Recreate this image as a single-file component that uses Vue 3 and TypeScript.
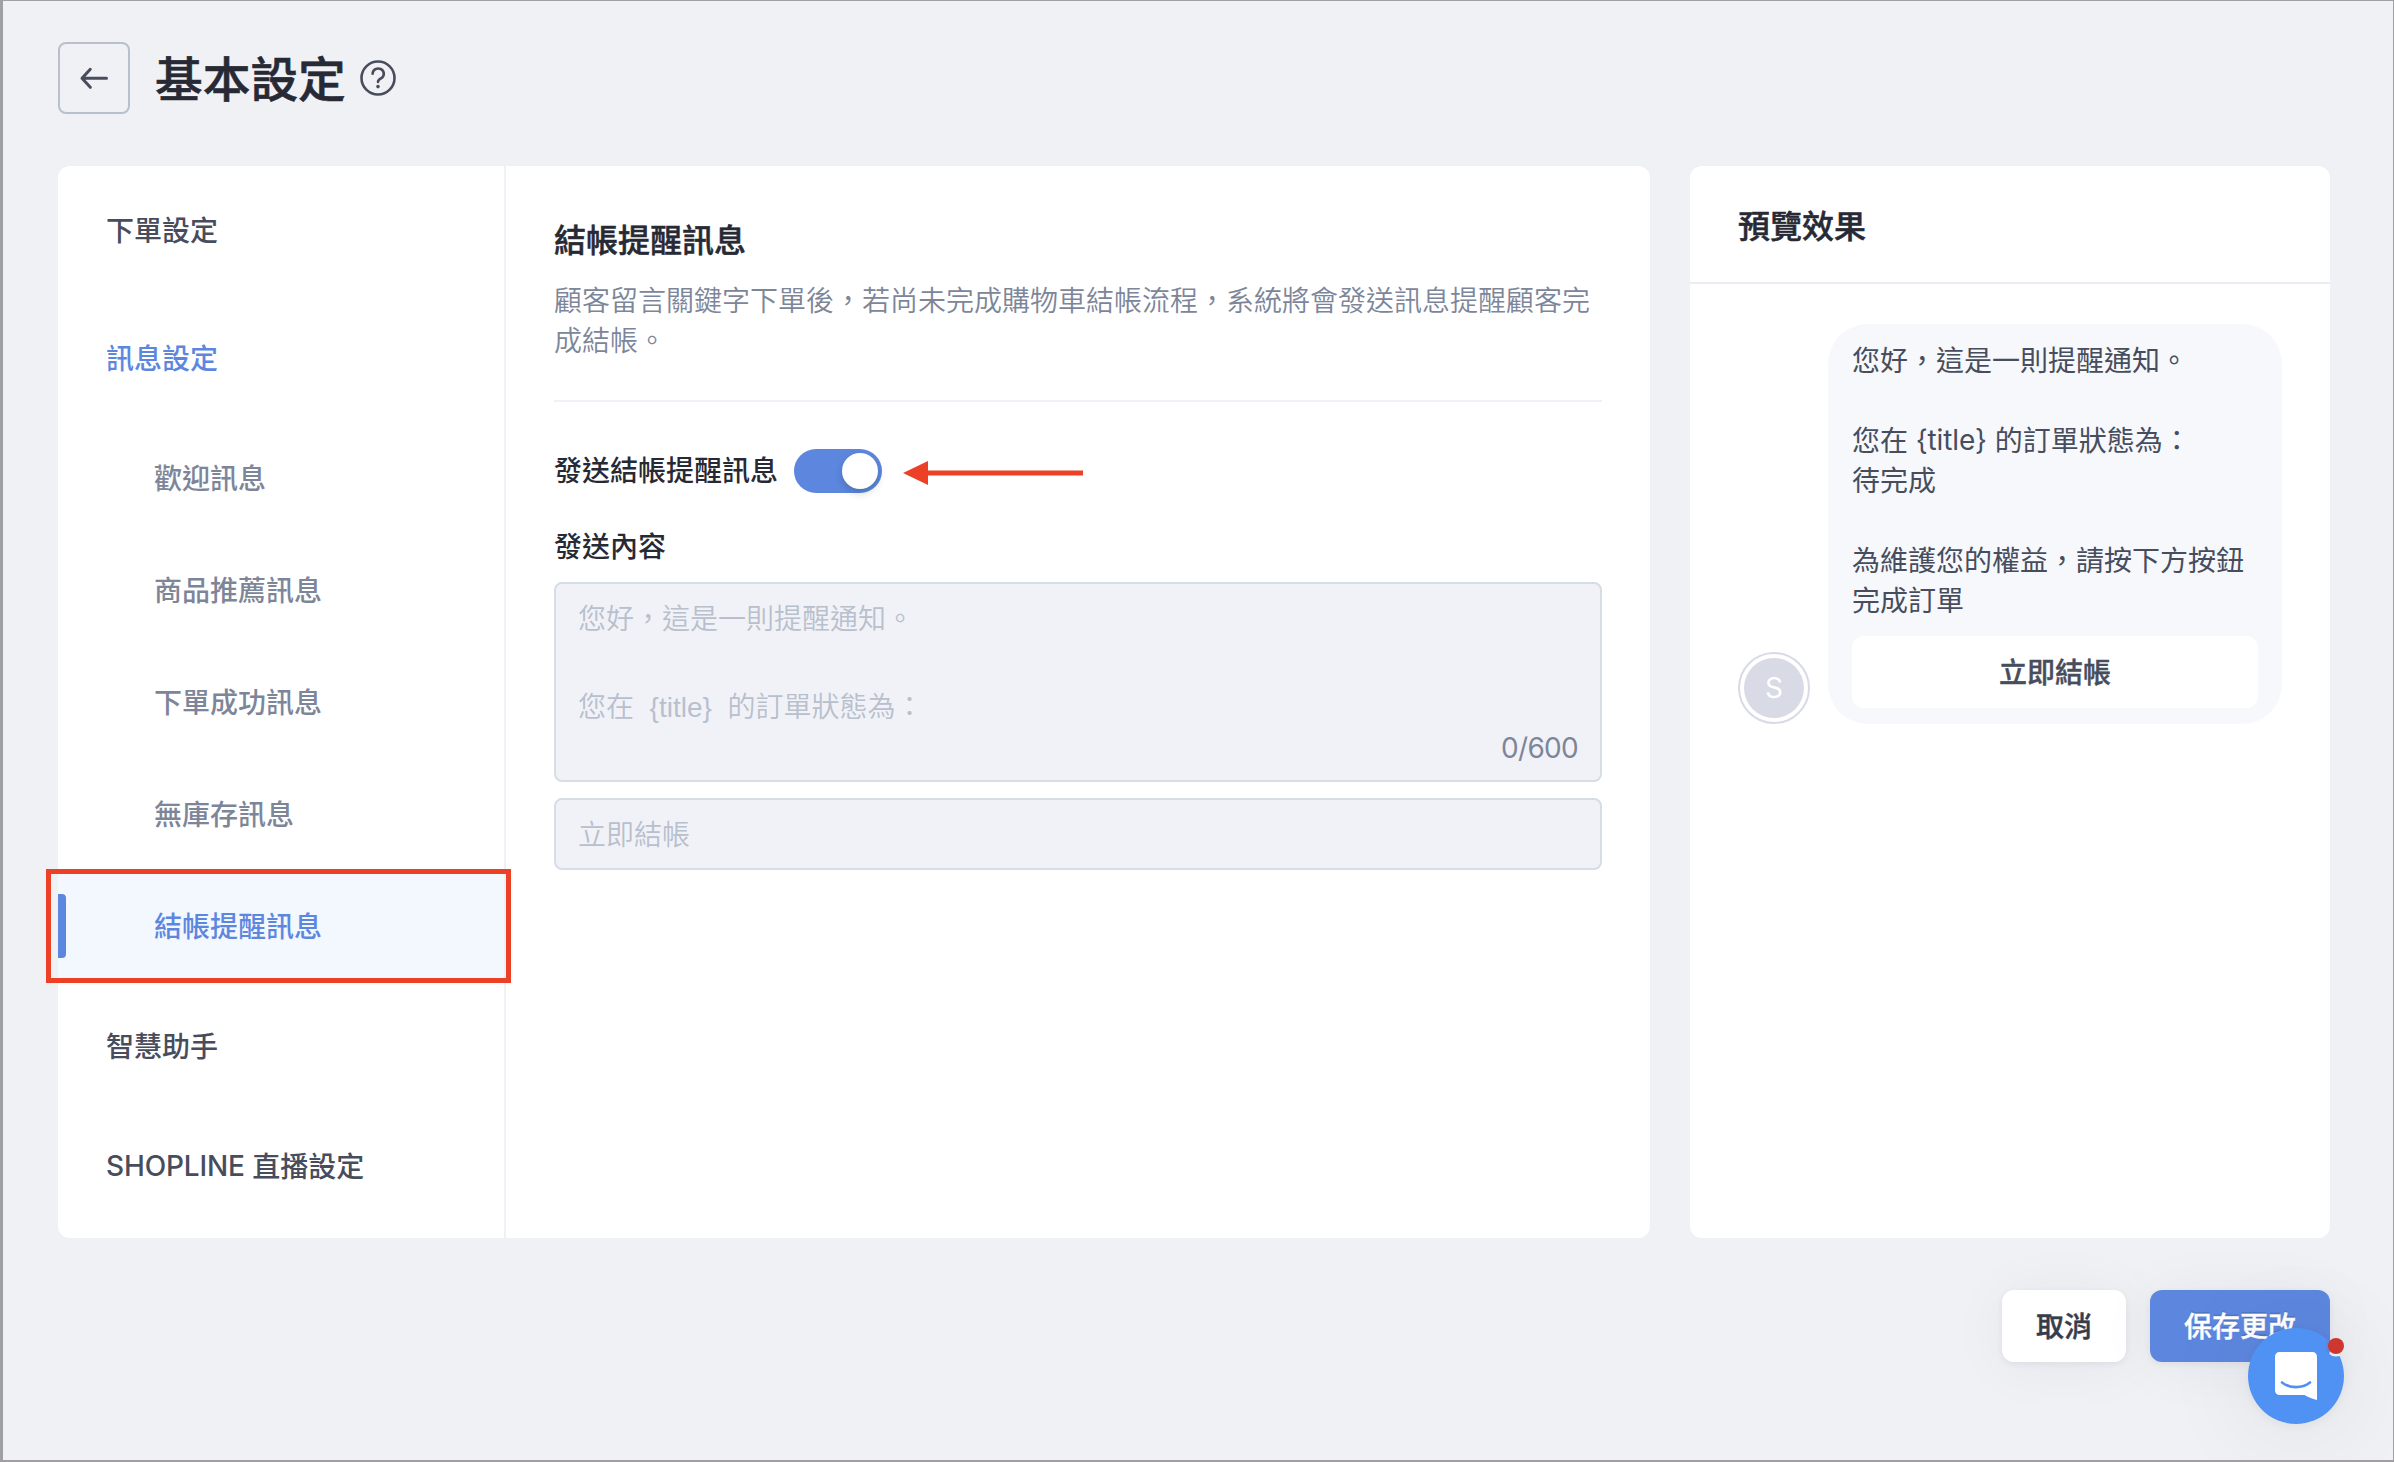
<script setup lang="ts">
interface NavItem {
  label: string
  latin?: string
  child?: boolean
  open?: boolean
  selected?: boolean
}

const navItems: NavItem[] = [
  { label: '下單設定' },
  { label: '訊息設定', open: true },
  { label: '歡迎訊息', child: true },
  { label: '商品推薦訊息', child: true },
  { label: '下單成功訊息', child: true },
  { label: '無庫存訊息', child: true },
  { label: '結帳提醒訊息', child: true, selected: true },
  { label: '智慧助手' },
  { latin: 'SHOPLINE ', label: '直播設定' },
]

const messagePlaceholder = '您好，這是一則提醒通知。\n\n您在  {title}  的訂單狀態為：'
</script>

<template>
  <div class="page">
    <header class="header">
      <button class="back" aria-label="返回">
        <svg width="32" height="32" viewBox="0 0 32 32" fill="none" stroke="#474d5c" stroke-width="3" stroke-linecap="round" stroke-linejoin="round">
          <path d="M28.5 16.3H4M12.300 7.3L4 16.3l8.300 9" />
        </svg>
      </button>
      <h1 class="title">基本設定</h1>
      <svg class="help" width="36" height="36" viewBox="0 0 36 36" fill="none" stroke="#474d5c" stroke-width="2.6" stroke-linecap="round" stroke-linejoin="round">
        <circle cx="18" cy="18" r="16.5" />
        <path d="M12.6 13.8a5.6 5.3 0 1 1 8.4 4.6c-1.9 1.1-3 1.7-3 3.5" />
        <circle cx="18" cy="26.6" r="1.8" fill="#474d5c" stroke="none" />
      </svg>
    </header>

    <main class="cards">
      <section class="card settings">
        <nav class="nav">
          <div
            v-for="item in navItems"
            :key="item.label"
            class="nav-item"
            :class="{ child: item.child, open: item.open, selected: item.selected }"
          >
            <span class="nav-label"><span v-if="item.latin" class="latin">{{ item.latin }}</span>{{ item.label }}</span>
            <span v-if="item.selected" class="outline"></span>
          </div>
        </nav>

        <div class="content">
          <h2 class="heading">結帳提醒訊息</h2>
          <p class="desc">顧客留言關鍵字下單後，若尚未完成購物車結帳流程，系統將會發送訊息提醒顧客完成結帳。</p>
          <div class="rule"></div>
          <div class="switch-row">
            <span class="label">發送結帳提醒訊息</span>
            <span class="switch"><span class="knob"></span></span>
            <svg class="arrow" width="180" height="24" viewBox="0 0 180 24">
              <path d="M0 12L25 0v9.5h155v5H25V24z" fill="#ec4126" />
            </svg>
          </div>
          <div class="label field-label">發送內容</div>
          <div class="field area">
            <div class="placeholder lines">{{ messagePlaceholder }}</div>
            <div class="counter">0/600</div>
          </div>
          <div class="field single">
            <span class="placeholder">立即結帳</span>
          </div>
        </div>
      </section>

      <section class="card preview">
        <div class="preview-head">預覽效果</div>
        <div class="chat">
          <div class="avatar"><span class="avatar-face">S</span></div>
          <div class="bubble">
            <div class="bubble-text">
              您好，這是一則提醒通知。<br /><br />
              您在<span class="latin"> {title} </span>的訂單狀態為：<br />
              待完成<br /><br />
              為維護您的權益，請按下方按鈕完成訂單
            </div>
            <div class="bubble-button">立即結帳</div>
          </div>
        </div>
      </section>
    </main>

    <footer class="footer">
      <button class="btn cancel">取消</button>
      <button class="btn save">保存更改</button>
    </footer>

    <div class="messenger">
      <svg width="96" height="96" viewBox="0 0 96 96">
        <defs>
          <mask id="badge-gap">
            <rect width="96" height="96" fill="#fff" />
            <circle cx="88" cy="18" r="10.5" fill="#000" />
          </mask>
        </defs>
        <circle cx="48" cy="48" r="48" fill="#5091f4" mask="url(#badge-gap)" />
        <path d="M31.500 24h33a4.500 4.500 0 0 1 4.500 4.500v43.500c-5-1.200-9-3-12.500-5H31.500a4.500 4.500 0 0 1-4.500-4.500V28.500a4.500 4.500 0 0 1 4.500-4.500z" fill="#fff" />
        <path d="M34 54.500c8 6.200 20 6.200 28 0" fill="none" stroke="#5091f4" stroke-width="2.600" stroke-linecap="round" />
        <circle cx="88" cy="18" r="8" fill="#cd372e" />
      </svg>
    </div>
  </div>
</template>

<style>
html,
body {
  margin: 0;
  background: #f0f1f5;
}
</style>

<style scoped>
.page {
  position: relative;
  box-sizing: border-box;
  width: 100vw;
  height: 100vh;
  overflow: hidden;
  padding: 41px 63px 0 55px;
  border: solid #9f9fa4;
  border-width: 1px 1px 2px 3px;
  background: #f0f1f5;
  font-family: Inter, 'Noto Sans CJK TC', sans-serif;
  font-size: 28px;
  color: #474d5c;
}
.latin {
  position: relative;
  top: -1px;
  letter-spacing: -0.13px;
  white-space: pre;
}
.header {
  display: flex;
  align-items: center;
  height: 72px;
}
.back {
  display: flex;
  align-items: center;
  justify-content: center;
  box-sizing: border-box;
  width: 72px;
  height: 72px;
  padding: 0;
  border: 2px solid #b8bfcd;
  border-radius: 8px;
  background: transparent;
}
.title {
  margin: 3px 0 0 25px;
  font-size: 47.7px;
  line-height: 72px;
  font-weight: 500;
  -webkit-text-stroke: 0.6px #272934;
  color: #272934;
}
.help {
  margin-left: 14px;
}
.cards {
  display: flex;
  gap: 40px;
  height: 1072px;
  margin-top: 52px;
}
.card {
  border-radius: 12px;
  background: #fff;
}
.settings {
  display: flex;
  width: 1592px;
}
.nav {
  box-sizing: border-box;
  width: 448px;
  border-right: 2px solid #f0f1f6;
}
.nav-item {
  position: relative;
  display: flex;
  align-items: center;
  box-sizing: border-box;
  height: 128px;
  padding: 2px 0 0 48px;
  font-weight: 500;
  line-height: 40px;
}
.nav-item:last-child {
  height: 112px;
}
.nav-item.child {
  height: 112px;
  padding-left: 96px;
  color: #7d8699;
}
.nav-item.open,
.nav-item.selected {
  color: #5d87df;
}
.nav-item.selected {
  background: #f3f8ff;
}
.nav-item.selected::before {
  content: '';
  position: absolute;
  left: 0;
  top: 24px;
  width: 8px;
  height: 64px;
  border-radius: 0 4px 4px 0;
  background: #5d87df;
}
.outline {
  position: absolute;
  left: -12px;
  right: -7px;
  top: -1px;
  bottom: -1px;
  border: 5px solid #ec4126;
}
.content {
  flex: 1;
  padding: 51px 48px 0;
}
.heading {
  margin: 0;
  font-size: 32px;
  line-height: 48px;
  font-weight: 500;
  -webkit-text-stroke: 0.5px #272934;
  color: #272934;
}
.desc {
  margin: 16px 0 0;
  line-height: 40px;
  font-weight: 350;
  color: #7d8699;
}
.rule {
  height: 2px;
  margin-top: 39px;
  background: #f0f1f6;
}
.switch-row {
  display: flex;
  align-items: center;
  height: 44px;
  margin-top: 47px;
}
.label {
  line-height: 40px;
  font-weight: 500;
  color: #272934;
}
.switch-row .label {
  margin-top: -1px;
}
.switch {
  display: flex;
  justify-content: flex-end;
  box-sizing: border-box;
  width: 88px;
  height: 44px;
  margin-left: 16px;
  padding: 4px;
  border-radius: 22px;
  background: #5d87df;
}
.knob {
  width: 36px;
  height: 36px;
  border-radius: 50%;
  background: #fff;
  box-shadow: 0 4px 8px rgba(0, 35, 11, 0.2);
}
.arrow {
  margin: 3px 0 0 21px;
}
.field-label {
  margin-top: 34px;
}
.field {
  box-sizing: border-box;
  padding: 0 22px;
  border: 2px solid #d5dde5;
  border-radius: 8px;
  background: #f1f2f7;
}
.area {
  display: flex;
  flex-direction: column;
  justify-content: space-between;
  height: 200px;
  margin-top: 15px;
  padding-top: 14px;
  padding-bottom: 12px;
}
.placeholder {
  font-family: 'Liberation Sans', 'Noto Sans CJK TC', sans-serif;
  line-height: 44px;
  font-weight: 350;
  color: #b8bfcd;
}
.lines {
  height: 130px;
  white-space: pre;
}
.counter {
  align-self: flex-end;
  height: 40px;
  line-height: 40px;
  letter-spacing: -0.7px;
  color: #7d8699;
}
.single {
  display: flex;
  align-items: center;
  height: 72px;
  margin-top: 16px;
  padding-top: 3px;
}
.preview {
  width: 640px;
}
.preview-head {
  box-sizing: border-box;
  height: 118px;
  padding: 37px 48px 0;
  border-bottom: 2px solid #e9ecf5;
  font-size: 32px;
  line-height: 48px;
  font-weight: 500;
  -webkit-text-stroke: 0.5px #272934;
  color: #272934;
}
.chat {
  display: flex;
  align-items: flex-end;
  gap: 18px;
  padding: 40px 48px;
}
.avatar {
  display: flex;
  box-sizing: border-box;
  width: 72px;
  height: 72px;
  padding: 4px;
  border: 2px solid #d8dae6;
  border-radius: 50%;
}
.avatar-face {
  flex: 1;
  border-radius: 50%;
  background: #d8dae6;
  color: #fff;
  line-height: 60px;
  text-align: center;
}
.bubble {
  box-sizing: border-box;
  width: 454px;
  height: 400px;
  padding: 17px 24px 0;
  border-radius: 40px;
  background: #f6f8fc;
}
.bubble-text {
  height: 280px;
  margin-right: -10px;
  line-height: 40px;
}
.bubble-button {
  box-sizing: border-box;
  height: 72px;
  margin-top: 15px;
  padding-top: 1px;
  border-radius: 12px;
  background: #fff;
  line-height: 72px;
  font-weight: 500;
  -webkit-text-stroke: 0.4px #474d5c;
  text-align: center;
}
.footer {
  display: flex;
  justify-content: flex-end;
  gap: 24px;
  margin-top: 52px;
}
.btn {
  box-sizing: border-box;
  height: 72px;
  padding: 2px 0 0;
  border: 0;
  border-radius: 12px;
  font: 500 28px / 70px Inter, 'Noto Sans CJK TC', sans-serif;
  box-shadow: 0 2px 6px rgba(40, 42, 60, 0.07), 0 4px 60px rgba(40, 42, 60, 0.05);
}
.cancel {
  width: 124px;
  background: #fff;
  color: #373c4b;
  -webkit-text-stroke: 0.4px #373c4b;
}
.save {
  width: 180px;
  background: #5d87df;
  color: #fff;
  -webkit-text-stroke: 0.4px #fff;
  text-shadow: 0 -2px 0 rgba(0, 0, 0, 0.12);
}
.messenger {
  position: absolute;
  right: 49px;
  bottom: 36px;
  width: 96px;
  height: 96px;
  border-radius: 50%;
  box-shadow: 0 2px 12px rgba(0, 0, 0, 0.05), 0 4px 100px rgba(0, 0, 0, 0.09);
}
.messenger svg {
  display: block;
}
</style>
